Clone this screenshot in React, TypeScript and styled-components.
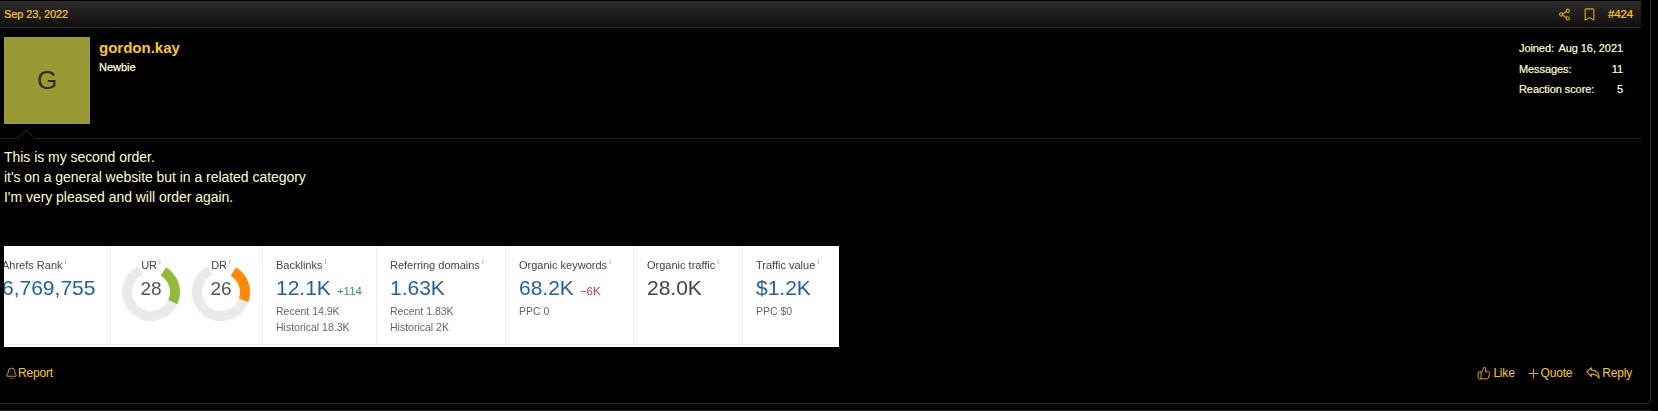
import React from "react";
import styled, { createGlobalStyle } from "styled-components";
import { Bell, Bookmark, Plus, Share2, ThumbsUp } from "lucide-react";

const GlobalStyle = createGlobalStyle`
	html, body {
		margin: 0;
		background: #000;
		font-family: "Liberation Sans", Arial, sans-serif;
	}
`;

const polar = (r: number, deg: number) => {
	const a = ((deg - 90) * Math.PI) / 180;
	return `${30 + r * Math.cos(a)} ${30 + r * Math.sin(a)}`;
};

const arc = (from: number, to: number) =>
	`M ${polar(24, from)} A 24 24 0 ${to - from > 180 ? 1 : 0} 1 ${polar(24, to)}`;

function ReplyIcon() {
	return (
		<svg width='14' height='12' viewBox='0 0 14 12' fill='none' stroke='currentColor' strokeWidth='1.2' strokeLinejoin='round'>
			<path d='M0.8 4.6 L5.4 0.8 V3.2 C10 3.2 13.2 5.4 13.2 11.2 C11.6 8.4 9.2 7.2 5.4 7.2 V9.4 Z' />
		</svg>
	);
}

function Ring({ label, value, color, end }: { label: string; value: string; color: string; end: number }) {
	return (
		<RingBox>
			<svg width='60' height='60' viewBox='0 0 60 60'>
				<path d={arc(end, 333)} fill='none' stroke='#e8eaed' strokeWidth='10' />
				<path d={arc(31, end)} fill='none' stroke={color} strokeWidth='10' />
			</svg>
			<RingLabel>
				{label}
				<Info>i</Info>
			</RingLabel>
			<RingValue>{value}</RingValue>
		</RingBox>
	);
}

function Metric({
	width,
	label,
	value,
	delta,
	down,
	plain,
	lines = [],
}: {
	width: number;
	label: string;
	value: string;
	delta?: string;
	down?: boolean;
	plain?: boolean;
	lines?: string[];
}) {
	return (
		<Cell $width={width}>
			<CellLabel>
				{label}
				<Info>i</Info>
			</CellLabel>
			<ValueRow>
				<Value $plain={plain}>{value}</Value>
				{delta && <Delta $down={down}>{delta}</Delta>}
			</ValueRow>
			{lines.map((line) => (
				<SubLine key={line}>{line}</SubLine>
			))}
		</Cell>
	);
}

export default function App() {
	return (
		<>
			<GlobalStyle />
			<Post>
				<Inner>
					<Header>
						<span>Sep 23, 2022</span>
						<HeaderActions>
							<Share2 size={13} strokeWidth={2} />
							<Bookmark size={15} strokeWidth={1.8} />
							<PostNumber>#424</PostNumber>
						</HeaderActions>
					</Header>
					<UserRow>
						<Avatar>G</Avatar>
						<UserInfo>
							<UserName>gordon.kay</UserName>
							<UserTitle>Newbie</UserTitle>
						</UserInfo>
						<Stats>
							<StatRow>
								<dt>Joined:</dt>
								<dd>Aug 16, 2021</dd>
							</StatRow>
							<StatRow>
								<dt>Messages:</dt>
								<dd>11</dd>
							</StatRow>
							<StatRow>
								<dt>Reaction score:</dt>
								<dd>5</dd>
							</StatRow>
						</Stats>
						<Caret />
					</UserRow>
					<Message>
						This is my second order.
						<br />
						it's on a general website but in a related category
						<br />
						I'm very pleased and will order again.
					</Message>
					<Metrics>
						<CellRow>
							<RankCell $width={107}>
								<CellLabel>
									Ahrefs Rank
									<Info>i</Info>
								</CellLabel>
								<ValueRow>
									<Value>6,769,755</Value>
								</ValueRow>
							</RankCell>
							<RingCell $width={152}>
								<Ring label='UR' value='28' color='#93bb3a' end={115} />
								<Ring label='DR' value='26' color='#ff8a00' end={110} />
							</RingCell>
							<Metric width={114} label='Backlinks' value='12.1K' delta='+114' lines={["Recent 14.9K", "Historical 18.3K"]} />
							<Metric width={129} label='Referring domains' value='1.63K' lines={["Recent 1.83K", "Historical 2K"]} />
							<Metric width={128} label='Organic keywords' value='68.2K' delta='−6K' down lines={["PPC 0"]} />
							<Metric width={109} label='Organic traffic' value='28.0K' plain />
							<Metric width={96} label='Traffic value' value='$1.2K' lines={["PPC $0"]} />
						</CellRow>
					</Metrics>
					<Footer>
						<FooterLink>
							<BellIcon size={13} strokeWidth={1.8} />
							Report
						</FooterLink>
						<FooterActions>
							<FooterLink>
								<ThumbsUp size={14} strokeWidth={1.7} />
								Like
							</FooterLink>
							<FooterLink>
								<PlusIcon size={15} strokeWidth={1.8} />
								Quote
							</FooterLink>
							<FooterLink>
								<ReplyIcon />
								Reply
							</FooterLink>
						</FooterActions>
					</Footer>
				</Inner>
			</Post>
			<NextPost />
		</>
	);
}

const Post = styled.article`
	box-sizing: border-box;
	width: 1651px;
	height: 404px;
	padding-top: 1px;
	border-right: 1px solid #2b2b2b;
	border-bottom: 1px solid #2b2b2b;
	border-bottom-right-radius: 4px;
`;

const NextPost = styled.div`
	width: 1651px;
	margin-top: 6px;
	border-top: 1px solid #2b2b2b;
`;

const Inner = styled.div`
	width: 1641px;
`;

const Header = styled.header`
	box-sizing: border-box;
	height: 27px;
	padding: 0 8px 0 4px;
	display: flex;
	align-items: center;
	justify-content: space-between;
	background: linear-gradient(#2c2c2c, #0f0f0f);
	border-bottom: 1px solid #2a2a2a;
	color: #ffcc00;
	font-size: 11px;
	letter-spacing: -0.12px;
	-webkit-text-stroke: 0.2px;
`;

const HeaderActions = styled.div`
	display: flex;
	align-items: center;
	gap: 11px;
	color: #d8a800;
`;

const PostNumber = styled.span`
	color: #ffcc00;
	font-size: 11.5px;
`;

const UserRow = styled.section`
	box-sizing: border-box;
	position: relative;
	height: 111px;
	padding: 9px 18px 0 4px;
	display: flex;
	align-items: flex-start;
	border-bottom: 1px solid #222;
`;

const Caret = styled.div`
	position: absolute;
	left: 20px;
	bottom: -6px;
	width: 11px;
	height: 11px;
	background: #000;
	border-top: 1px solid #222;
	border-left: 1px solid #222;
	transform: rotate(45deg);
`;

const Avatar = styled.div`
	width: 86px;
	height: 87px;
	display: flex;
	align-items: center;
	justify-content: center;
	background: #999933;
	color: #2e2e0f;
	font-size: 26px;
`;

const UserInfo = styled.div`
	margin-left: 9px;
	flex: 1;
`;

const UserName = styled.div`
	margin-top: 2px;
	color: #ffcc00;
	font-size: 15px;
	font-weight: 700;
	line-height: 17px;
`;

const UserTitle = styled.div`
	margin-top: 5px;
	color: #ffffcc;
	font-size: 11px;
	line-height: 13px;
	-webkit-text-stroke: 0.25px;
`;

const Stats = styled.dl`
	width: 104px;
	margin: 1px 0 0;
	color: #ffffcc;
	font-size: 11px;
	letter-spacing: -0.08px;
	-webkit-text-stroke: 0.2px;
`;

const StatRow = styled.div`
	height: 20.5px;
	display: flex;
	justify-content: space-between;
	align-items: center;

	dt,
	dd {
		margin: 0;
	}
`;

const Message = styled.div`
	padding: 8px 0 0 4px;
	color: #ffffcc;
	font-size: 14px;
	line-height: 20px;
	letter-spacing: -0.04px;
`;

const Metrics = styled.div`
	box-sizing: border-box;
	width: 835px;
	height: 101px;
	margin: 39px 0 0 4px;
	background: #fff;
	overflow: hidden;
	filter: blur(0.35px);
`;

const CellRow = styled.div`
	display: flex;
	height: 98px;
	border-bottom: 1px solid #eceeef;
`;

const Cell = styled.div<{ $width: number }>`
	box-sizing: border-box;
	width: ${(p) => p.$width}px;
	padding: 12px 0 0 13px;
	border-right: 1px solid #eceeef;
	overflow: hidden;

	&:last-child {
		border-right: 0;
	}
`;

const RankCell = styled(Cell)`
	padding-left: 0;

	> * {
		margin-left: -2px;
	}
`;

const RingCell = styled(Cell)`
	display: flex;
	gap: 10px;
	padding: 16px 0 0 10px;
`;

const RingBox = styled.div`
	position: relative;
	width: 60px;
	height: 60px;
`;

const RingLabel = styled.div`
	position: absolute;
	top: -3px;
	left: 0;
	width: 60px;
	box-sizing: border-box;
	text-align: center;
	color: #444;
	font-size: 11px;
	line-height: 13px;
`;

const RingValue = styled.div`
	position: absolute;
	top: 16px;
	left: 0;
	width: 60px;
	text-align: center;
	color: #555;
	font-size: 19px;
	line-height: 22px;
`;

const CellLabel = styled.div`
	color: #444;
	font-size: 11px;
	line-height: 14px;
	white-space: nowrap;
`;

const Info = styled.sup`
	margin-left: 2px;
	color: #999;
	font-size: 8px;
	line-height: 0;
`;

const ValueRow = styled.div`
	display: flex;
	align-items: baseline;
	gap: 6px;
	margin-top: 3px;
	white-space: nowrap;
`;

const Value = styled.span<{ $plain?: boolean }>`
	color: ${(p) => (p.$plain ? "#444" : "#1f5fb0")};
	font-size: 21px;
	line-height: 26px;
`;

const Delta = styled.span<{ $down?: boolean }>`
	color: ${(p) => (p.$down ? "#d9363e" : "#2a9d5c")};
	font-size: 11.5px;
`;

const SubLine = styled.div`
	color: #666;
	font-size: 10.5px;
	line-height: 16px;
	white-space: nowrap;

	${ValueRow} + & {
		margin-top: 2px;
	}
`;

const Footer = styled.footer`
	height: 26px;
	margin-top: 13px;
	padding: 0 9px 0 5px;
	display: flex;
	align-items: center;
	justify-content: space-between;
`;

const FooterActions = styled.div`
	display: flex;
	gap: 14px;
`;

const FooterLink = styled.a`
	display: flex;
	align-items: center;
	gap: 2px;
	color: #ffcc00;
	font-size: 12px;
	letter-spacing: -0.2px;

	svg {
		color: #d8a800;
	}
`;

const BellIcon = styled(Bell)`
	margin-right: -2px;
`;

const PlusIcon = styled(Plus)`
	margin: 0 -2px 0 -3px;
`;
